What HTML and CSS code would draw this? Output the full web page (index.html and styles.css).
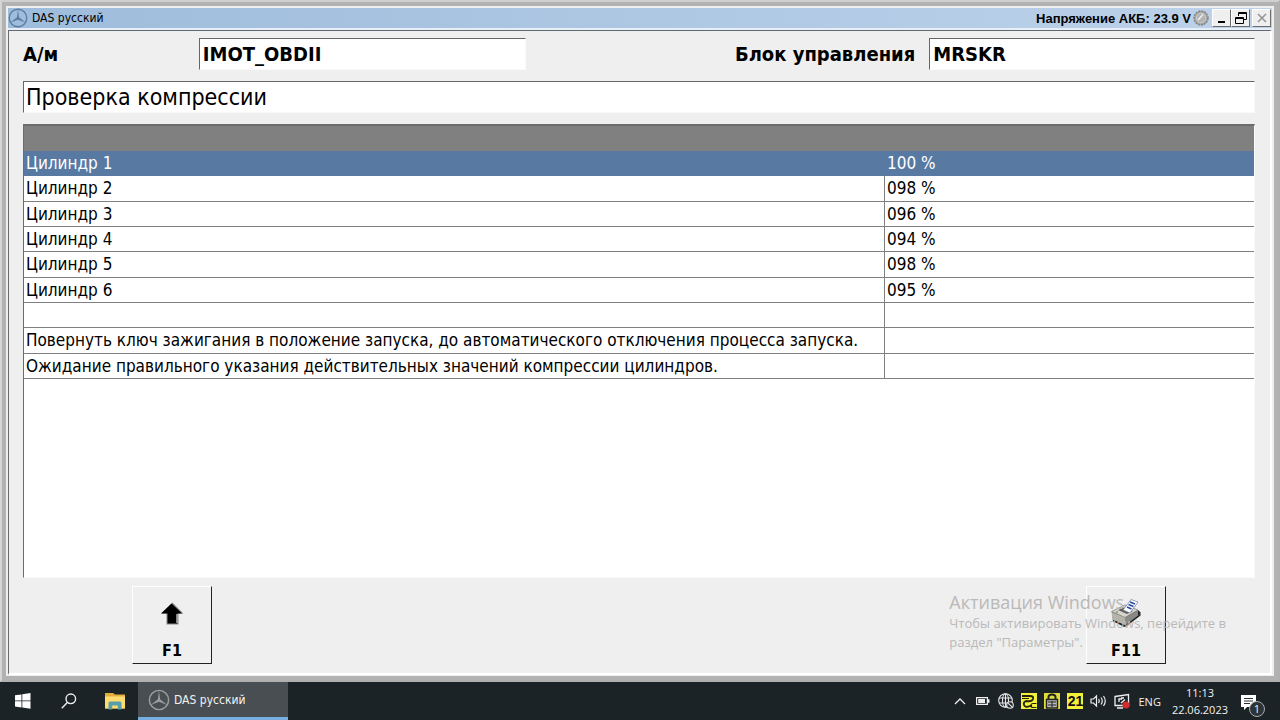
FILE: index.html
```html
<!DOCTYPE html>
<html lang="ru">
<head>
<meta charset="utf-8">
<title>DAS русский</title>
<link rel="stylesheet" href="styles.css">
</head>
<body>
<svg class="defs" aria-hidden="true">
  <symbol id="star" viewBox="0 0 24 24">
    <circle cx="12" cy="12" r="10.5" fill="none" stroke="currentColor" stroke-width="1.6"/>
    <path d="M12 1.5L13.2 11.2L21 17.5L12 14L3 17.5L10.8 11.2Z" fill="currentColor"/>
  </symbol>
</svg>
<div class="window">
  <header class="titlebar">
    <svg class="title-icon"><use href="#star"/></svg>
    <h1 class="title">DAS русский</h1>
    <span class="voltage">Напряжение АКБ: 23.9 V</span>
    <svg class="lamp" viewBox="0 0 16 16" aria-hidden="true">
      <circle cx="8" cy="8" r="7" fill="#a4a4a4" stroke="#858585" stroke-width="1.4" stroke-dasharray="2 1"/>
      <circle cx="8" cy="8" r="4.8" fill="#b4b4b4" stroke="#ccc"/>
      <path d="M5 10L10 4.5" stroke="#eee" stroke-width="1.5"/>
    </svg>
    <div class="window-buttons">
      <button class="winbtn" aria-label="Свернуть"><svg viewBox="0 0 14 14"><path d="M3 11H10" stroke="#000" stroke-width="2"/></svg></button>
      <button class="winbtn" aria-label="Восстановить"><svg viewBox="0 0 14 14" fill="none" stroke="#000"><path d="M4.5 5V1.5H12.5V8.5H9.5M4.5 2.5H12.5"/><path d="M1.5 6.5H9.5V12.5H1.5ZM1.5 7.5H9.5"/></svg></button>
      <button class="winbtn winbtn-close" aria-label="Закрыть" disabled><svg viewBox="0 0 14 14"><path d="M3 3L11 11M11 3L3 11" stroke="#969696" stroke-width="1.6"/></svg></button>
    </div>
  </header>
  <main class="client">
    <div class="fields">
      <label class="label" for="car">А/м</label>
      <input class="box" id="car" value="IMOT_OBDII" readonly>
      <label class="label label-right" for="unit">Блок управления</label>
      <input class="box" id="unit" value="MRSKR" readonly>
    </div>
    <h2 class="heading">Проверка компрессии</h2>
    <div class="panel">
      <table class="grid">
        <thead><tr><th></th><th></th></tr></thead>
        <tbody>
          <tr class="selected"><td>Цилиндр 1</td><td>100 %</td></tr>
          <tr><td>Цилиндр 2</td><td>098 %</td></tr>
          <tr><td>Цилиндр 3</td><td>096 %</td></tr>
          <tr><td>Цилиндр 4</td><td>094 %</td></tr>
          <tr><td>Цилиндр 5</td><td>098 %</td></tr>
          <tr><td>Цилиндр 6</td><td>095 %</td></tr>
          <tr><td></td><td></td></tr>
          <tr><td>Повернуть ключ зажигания в положение запуска, до автоматического отключения процесса запуска.</td><td></td></tr>
          <tr><td>Ожидание правильного указания действительных значений компрессии цилиндров.</td><td></td></tr>
        </tbody>
      </table>
    </div>
    <div class="keys">
      <button class="key">
        <svg class="key-icon" viewBox="0 0 32 32" aria-hidden="true">
          <path d="M16.500 4.500L27.500 15.500H22.500V26.500H10.500V15.500H5.500Z" fill="#888"/>
          <path d="M15.500 5.500L26 15.500H21.500V25.500H11.500V15.500H5Z" fill="#000"/>
          <path d="M21 16V25" stroke="#fff"/>
        </svg>
        <span>F1</span>
      </button>
      <button class="key">
        <svg class="key-icon" viewBox="0 0 32 32" aria-hidden="true">
          <path d="M2 14L14 8L29 13L31 17L17 28L14 29L3 23Z" fill="#555"/>
          <path d="M1.500 13.500L15 7L28 12L15 19.500Z" fill="#d6d6cc" stroke="#777" stroke-width=".7"/>
          <path d="M1.500 14L15 19.500V28L2.500 22Z" fill="#b3b3aa"/>
          <path d="M15 19.500L28 12.500V19L15 28Z" fill="#8a8a84"/>
          <path d="M3 22.500L15 28L30 17" fill="none" stroke="#222" stroke-width="1.500"/>
          <path d="M28 12L31 15L28 17" fill="#222"/>
          <path d="M8 12L14 9.500L23 13L17 16Z" fill="#606060"/>
          <path d="M13 12L21 1.500L28 4L20 15Z" fill="#fff" stroke="#6678a5" stroke-width=".7"/>
          <path d="M20 4L25 6M18.500 6.500L23.500 8.500M17 9L21.500 11" stroke="#2749a0" stroke-width="1.600"/>
          <circle cx="7" cy="14" r=".8" fill="#357c43"/>
        </svg>
        <span>F11</span>
      </button>
    </div>
  </main>
  <aside class="watermark">
    <p class="wm-title">Активация Windows</p>
    <p class="wm-text">Чтобы активировать Windows, перейдите в<br>раздел "Параметры".</p>
  </aside>
</div>
<footer class="taskbar">
  <button class="task" aria-label="Пуск"><svg width="16" height="16" viewBox="0 0 16 16" fill="#fff"><path d="M0 2.300L6.500 1.400V7.500H0ZM7.300 1.300L15.500 0V7.500H7.300ZM0 8.300H6.500V14.500L0 13.600ZM7.300 8.300H15.500V15.800L7.300 14.600Z"/></svg></button>
  <button class="task" aria-label="Поиск"><svg width="16" height="16" viewBox="0 0 16 16" fill="none" stroke="#eee" stroke-width="1.400"><circle cx="9.800" cy="5.800" r="4.800"/><path d="M6.300 9.500L.8 15.200"/></svg></button>
  <button class="task" aria-label="Проводник"><svg width="20" height="18" viewBox="0 0 20 18"><path d="M0 1H8L10 2.500H20V16.500H0Z" fill="#e4ae3e"/><path d="M0 4.500H20V16.500H0Z" fill="#ffdc70"/><path d="M3.500 17.500V11Q3.500 9.500 5 9.500H15Q16.500 9.500 16.500 11V17.500H12.800V13.500H7.200V17.500Z" fill="#559eab"/></svg></button>
  <button class="task-app"><svg class="app-icon"><use href="#star"/></svg>DAS русский</button>
  <div class="tray">
    <svg width="12" height="12" viewBox="0 0 12 12" fill="none" stroke="#eee" stroke-width="1.300"><path d="M1 9L6 4L11 9"/></svg>
    <svg class="battery" width="14" height="12" viewBox="0 0 14 12"><path d="M.6 2.600H11.400V9.400H.6Z" fill="none" stroke="#eee" stroke-width="1.200"/><path d="M2.200 4H9V8H2.200ZM12 4.300H13.500V7.700H12Z" fill="#eee"/></svg>
    <svg width="16" height="16" viewBox="0 0 16 16" fill="none" stroke="#e6e6e6" stroke-width="1.100"><circle cx="7.500" cy="7.500" r="6.800"/><ellipse cx="7.500" cy="7.500" rx="3" ry="6.800"/><path d="M1 5H14M1 10H14M7.500 1V14"/><circle cx="12" cy="12" r="3.300" fill="#1d2529"/><path d="M9.800 9.800L14.200 14.200"/></svg>
    <svg width="16" height="16" viewBox="0 0 16 16"><path d="M0 0H16V16H0Z" fill="#f3f03a"/><path d="M1 3H9Q13 3 12 6T5 8Q2 9 3 12T9 13H11" fill="none" stroke="#24240b" stroke-width="1.800"/><path d="M1 5.500H8M15.500 10.500H12Q10 10.500 10 12.500T12 14.500H15.500" fill="none" stroke="#24240b" stroke-width="1.200"/></svg>
    <svg width="16" height="16" viewBox="0 0 16 16"><path d="M0 0H16V16H0Z" fill="#dfdc3c"/><path d="M4.500 7V4Q4.500 1.500 8 1.500T11.500 4V7" fill="none" stroke="#222" stroke-width="2"/><path d="M2.500 6.500H13.500V15H2.500Z" fill="#bbb" stroke="#222" stroke-width="1.400"/><path d="M4 9H12M4 12H12M8 8V14" stroke="#222"/></svg>
    <span class="badge21">21</span>
    <svg width="17" height="14" viewBox="0 0 17 14" fill="none" stroke="#eee" stroke-width="1.200"><path d="M1 5H3.500L6.500 2V12L3.500 9H1ZM8.500 5Q10 7 8.500 9M11 3.500Q13.500 7 11 10.500M13.500 2Q17 7 13.500 12"/></svg>
    <svg width="16" height="16" viewBox="0 0 16 16"><path d="M1 3.500L14.500 1.500V12.500H1ZM3 15H9" fill="none" stroke="#eee" stroke-width="1.300"/><path d="M5 9V6H8M10 5H7M7 10L11 6.500" fill="none" stroke="#eee" stroke-width="1.300"/><circle cx="12" cy="12" r="3.600" fill="#d32c2f"/></svg>
    <span class="lang">ENG</span>
    <time class="clock" datetime="2023-06-22T11:13">11:13<br>22.06.2023</time>
    <button class="notify" aria-label="Уведомления"><svg width="17" height="16" viewBox="0 0 17 16"><path d="M0 0H15V12H6L3 15V12H0Z" fill="#fff"/><path d="M3 3.500H12M3 6H12M3 8.500H9" stroke="#273035"/></svg><span class="count">1</span></button>
  </div>
</footer>
</body>
</html>
```
FILE: styles.css
```css
* { box-sizing: border-box; }

body {
  margin: 0;
  height: 100vh;
  display: flex;
  flex-direction: column;
  background: #efefef;
  color: #000;
  font-family: "DejaVu Sans Condensed", "DejaVu Sans", sans-serif;
}

button, input { font: inherit; color: inherit; margin: 0; }
.defs { position: absolute; width: 0; height: 0; }

.window {
  position: relative;
  flex: 1;
  min-height: 0;
  display: flex;
  flex-direction: column;
  padding: 6px 6px 5px;
  background: #efefef;
  border: 2px solid #b0b0b0;
  border-top-color: #d0d0d0;
  border-left-color: #d6d6d6;
  box-shadow: inset 0 0 0 4px #b2b2b2;
}

.titlebar {
  display: flex;
  align-items: center;
  height: 22px;
  flex: none;
  padding: 0 1px 0 0;
  background: linear-gradient(90deg, #9ebcdc, #bdd2ea);
  border-bottom: 2px solid #e7eef6;
}
.title-icon { width: 20px; height: 20px; color: #5b7da3; }
.title { flex: 1; margin: 0 0 0 4px; font-size: 12px; font-weight: normal; }
.voltage { font: bold 13px "Liberation Sans", sans-serif; }
.lamp { width: 16px; height: 16px; margin: 0 3px 0 2px; }
.window-buttons { display: flex; }
.winbtn {
  width: 19px;
  height: 18px;
  padding: 0;
  background: #efefef;
  border: 1px solid;
  border-color: #fff #6c6c6c #6c6c6c #fff;
}
.winbtn svg { display: block; width: 14px; height: 14px; margin: auto; }
.winbtn-close { margin-left: 2px; }

.client {
  flex: 1;
  min-height: 0;
  display: flex;
  flex-direction: column;
  padding: 7px 15px 9px 14px;
  border: 2px solid #fff;
  border-top: 1px solid #606a74;
  border-left: 1px solid #6c6c6c;
}

.fields {
  display: grid;
  grid-template-columns: 176fr 327fr 404fr 326fr;
  align-items: center;
  margin-bottom: 11px;
  font-size: 20px;
  font-weight: bold;
}
.label-right { padding-right: 14px; text-align: right; }
.box {
  width: 100%;
  height: 32px;
  padding: 0 3px 1px;
  background: #fff;
  border: 1px solid #fafafa;
  border-top-color: #666;
  border-left-color: #666;
  border-radius: 0;
}

.heading {
  margin: 0 0 11px;
  padding: 0 2px;
  font-size: 23px;
  line-height: 30px;
  font-weight: normal;
  background: #fff;
  border: 1px solid #fafafa;
  border-top-color: #666;
  border-left-color: #666;
}

.panel {
  flex: 1;
  min-height: 0;
  background: #fff;
  border: 1px solid #fafafa;
  border-top: 2px solid #6c6c6c;
  border-left: 1px solid #6c6c6c;
}
.grid {
  width: 100%;
  height: 253px;
  border-collapse: separate;
  border-spacing: 0;
  table-layout: fixed;
  font-size: 17px;
  line-height: 22px;
}
.grid th { height: 25px; padding: 0; background: #808080; }
.grid th:first-child { width: 70%; }
.grid td {
  height: 25px;
  padding: 0 2px;
  border-bottom: 1px solid #808080;
  white-space: nowrap;
}
.grid td:first-child { border-right: 1px solid #808080; }
.grid .selected td { background: #5779a2; border-color: #5779a2; color: #fff; }

.keys {
  display: flex;
  justify-content: space-between;
  padding: 8px 89px 0 109px;
}
.key {
  width: 80px;
  height: 78px;
  padding: 11px 0 0;
  display: flex;
  flex-direction: column;
  align-items: center;
  gap: 12px;
  background: #efefef;
  border: 1px solid;
  border-color: #fff #222 #222 #fff;
  font-size: 16px;
  line-height: 18px;
  font-weight: bold;
}
.key-icon { width: 32px; height: 32px; flex: none; }

.watermark {
  position: absolute;
  right: 52px;
  bottom: 28px;
  color: #b9b9b9;
  font-family: "Open Sans", sans-serif;
  pointer-events: none;
}
.watermark p { margin: 0; }
.wm-title { font-size: 18px; line-height: 24px; }
.wm-text { font-size: 13px; line-height: 19px; }

.taskbar {
  flex: none;
  display: flex;
  height: 38px;
  background: #1b2327;
  color: #f2f2f2;
  font-size: 12px;
}
.task {
  width: 46px;
  padding: 0;
  display: flex;
  align-items: center;
  justify-content: center;
  background: none;
  border: 0;
}
.task-app {
  width: 150px;
  display: flex;
  align-items: center;
  gap: 4px;
  padding: 0 10px;
  background: #494e52;
  border: 0;
  border-bottom: 3px solid #76aee0;
}
.app-icon { width: 22px; height: 22px; color: #9b9fa2; }
.tray {
  margin-left: auto;
  display: flex;
  align-items: center;
  gap: 7px;
  padding-right: 15px;
  font-family: "Open Sans", sans-serif;
}
.battery { margin: 0 1px 0 3px; }
.badge21 {
  width: 16px;
  background: #f3f03a;
  color: #111;
  font: bold 14px/16px "Liberation Sans", sans-serif;
  text-align: center;
}
.lang { margin-left: 1px; font-size: 11px; }
.clock { margin-left: 4px; font-size: 11px; line-height: 17px; text-align: center; }
.notify {
  position: relative;
  width: 24px;
  height: 24px;
  margin-left: 6px;
  padding: 3px 0 0;
  background: none;
  border: 0;
  text-align: left;
}
.notify svg { display: block; }
.count {
  position: absolute;
  right: 0;
  bottom: -4px;
  width: 16px;
  height: 16px;
  border: 1px solid #aaa;
  border-radius: 50%;
  background: #2d3438;
  font-size: 11px;
  line-height: 14px;
  text-align: center;
}
```
